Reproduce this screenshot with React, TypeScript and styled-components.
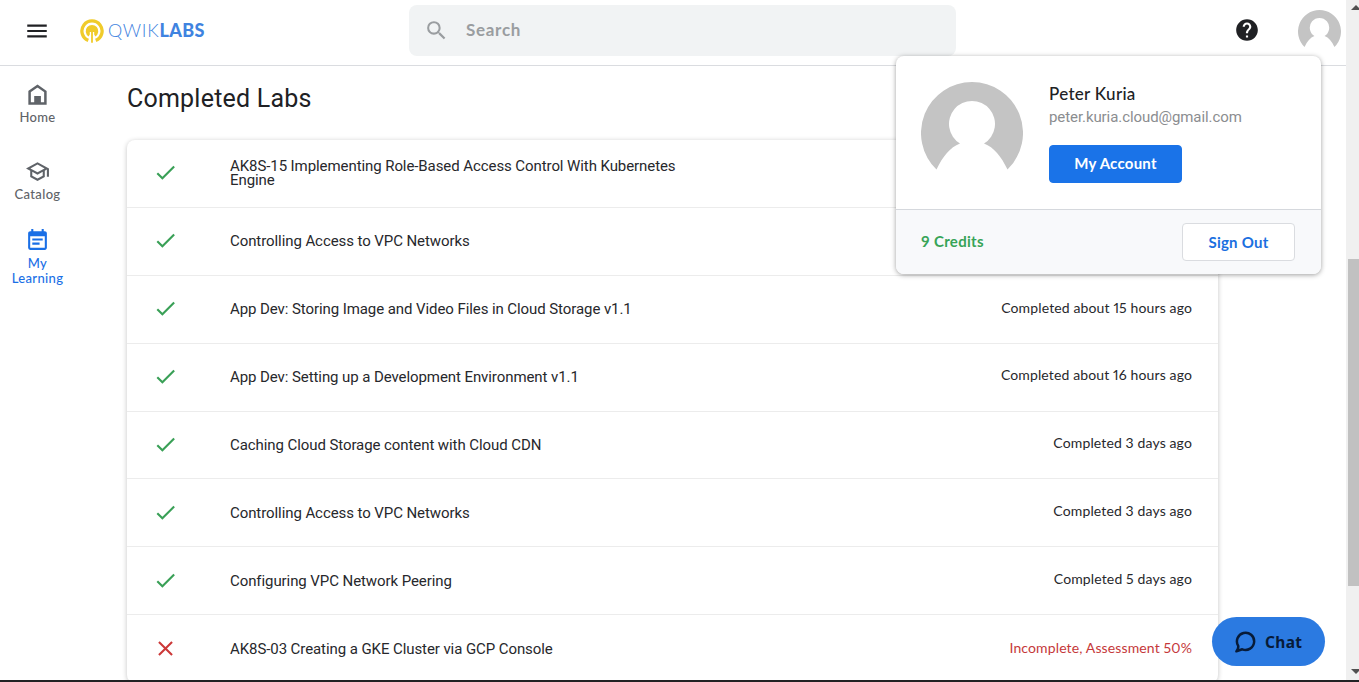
import React from "react";
import styled, { createGlobalStyle } from "styled-components";
import {
  MdCheck,
  MdClose,
  MdEventNote,
  MdHelp,
  MdMenu,
  MdOutlineSchool,
  MdSearch,
} from "react-icons/md";

const sans = `"Open Sans", "Liberation Sans", sans-serif`;
const product = `Lato, "Liberation Sans", sans-serif`;
const roboto = `Roboto, "Liberation Sans", sans-serif`;

const GlobalStyle = createGlobalStyle`
  * { box-sizing: border-box; }
  body { margin: 0; background: #fff; color: #202124; font-family: ${roboto}; overflow: hidden; }
  button { margin: 0; padding: 0; border: 0; background: none; font: inherit; cursor: pointer; }
  svg { display: block; }
`;

const Window = styled.div`
  display: flex;
  height: 682px;
  border-bottom: 2px solid #222224;
  overflow: hidden;
`;

const Page = styled.div`
  position: relative;
  flex: 1;
  display: flex;
  flex-direction: column;
  min-width: 0;
`;

const Header = styled.header`
  flex: none;
  display: grid;
  grid-template-columns: 409px 547px 1fr;
  height: 66px;
  border-bottom: 1px solid #dadce0;
`;

const Brand = styled.div`
  display: flex;
  align-items: center;
  height: 61px;
  padding-left: 24px;
  gap: 30px;
`;

const Logo = styled.div`
  display: flex;
  align-items: center;
  gap: 4px;
`;

const Wordmark = styled.span`
  padding-bottom: 1px;
  font: 300 18px/24px ${product};
  letter-spacing: 0.7px;
  color: #3f83e0;
  white-space: nowrap;

  b {
    font-weight: 900;
    letter-spacing: 0.4px;
  }
`;

const SearchBox = styled.div`
  display: flex;
  align-items: center;
  gap: 17px;
  height: 51px;
  margin-top: 5px;
  padding: 0 0 1px 15px;
  border-radius: 8px;
  background: #f1f3f4;
  color: #9a9da0;
  font: 700 17px/24px ${product};
  letter-spacing: 0.7px;
`;

const HeaderActions = styled.div`
  display: flex;
  align-items: center;
  justify-content: flex-end;
  gap: 38px;
  height: 60px;
  padding-right: 5px;
`;

const HeaderAvatar = styled.div`
  padding-top: 3px;
`;

const Body = styled.div`
  flex: 1;
  display: flex;
  min-height: 0;
`;

const SideNav = styled.nav`
  width: 75px;
  display: flex;
  flex-direction: column;
  align-items: center;
  padding-top: 16px;
`;

const NavItem = styled.button<{ $active?: boolean; $height: number }>`
  flex: none;
  display: flex;
  flex-direction: column;
  align-items: center;
  gap: 3px;
  width: 75px;
  height: ${(p) => p.$height}px;
  font: 500 13px/15px ${product};
  letter-spacing: 0.35px;
  color: ${(p) => (p.$active ? "#1a6fe6" : "#5f6368")};
`;

const Main = styled.main`
  flex: 1;
  min-width: 0;
  padding: 16px 128px 0 52px;
`;

const Heading = styled.h1`
  margin: 0 0 24.05px;
  font: 400 25px/34px ${roboto};
  letter-spacing: 0.22px;
  color: #202124;
`;

const LabCard = styled.section`
  border-radius: 8px;
  box-shadow: 0 1px 5px rgba(0, 0, 0, 0.24);
`;

const LabRow = styled.div`
  display: grid;
  grid-template-columns: 103px 470px 1fr;
  align-items: center;
  height: 67.875px;
  padding-right: 26px;
  border-bottom: 1px solid #ececec;
`;

const StatusIcon = styled.span<{ $failed?: boolean }>`
  padding: 0 0 1px 26px;
  color: ${(p) => (p.$failed ? "#cc3838" : "#3aa057")};
`;

const LabTitle = styled.span`
  font: 400 15px/14px ${roboto};
  letter-spacing: -0.08px;
  color: #27282c;
`;

const LabStatus = styled.span<{ $failed?: boolean }>`
  padding-bottom: ${(p) => (p.$failed ? 1.4 : 3.4)}px;
  text-align: right;
  white-space: nowrap;
  font: 400 14px/18px ${product};
  font-variant-numeric: proportional-nums;
  letter-spacing: 0.13px;
  color: ${(p) => (p.$failed ? "#c5383a" : "#27282c")};
`;

const AccountMenu = styled.aside`
  position: absolute;
  top: 56px;
  left: 896px;
  width: 425px;
  height: 218px;
  display: flex;
  flex-direction: column;
  border-radius: 8px;
  background: #fff;
  box-shadow: 0 1px 5px rgba(0, 0, 0, 0.38);
`;

const Profile = styled.div`
  display: flex;
  gap: 26px;
  height: 154px;
  padding: 26px 25px 0;
  border-bottom: 1px solid #d5d8dd;
`;

const ProfileText = styled.div`
  display: flex;
  flex-direction: column;
  align-items: flex-start;
`;

const UserName = styled.strong`
  font: 500 17px/24px ${product};
  letter-spacing: 0.3px;
  color: #202124;
`;

const Email = styled.span`
  font: 400 15px/22px ${roboto};
  letter-spacing: -0.08px;
  color: #8b8d90;
`;

const MenuFooter = styled.div`
  flex: 1;
  display: flex;
  align-items: center;
  justify-content: space-between;
  padding: 0 26px 0 25px;
  border-radius: 0 0 8px 8px;
  background: #f8f9fb;
`;

const Credits = styled.span`
  padding-bottom: 2px;
  font: 700 15px/20px ${product};
  letter-spacing: 0.3px;
  color: #37a457;
`;

const MenuButton = styled.button<{ $primary?: boolean }>`
  width: ${(p) => (p.$primary ? 133 : 113)}px;
  height: 38px;
  margin-top: ${(p) => (p.$primary ? 17 : 0)}px;
  padding-bottom: ${(p) => (p.$primary ? 2 : 0)}px;
  border: 1px solid ${(p) => (p.$primary ? "#1a73e8" : "#dadce0")};
  border-radius: 4px;
  background: ${(p) => (p.$primary ? "#1a73e8" : "#fff")};
  color: ${(p) => (p.$primary ? "#fff" : "#1a6fe0")};
  font: 700 15px/20px ${product};
  letter-spacing: 0.25px;
`;

const ChatButton = styled.button`
  position: absolute;
  left: 1212px;
  top: 617px;
  display: flex;
  align-items: center;
  gap: 9px;
  width: 113px;
  height: 49px;
  padding-left: 22px;
  border-radius: 25px;
  background: #2b7ae1;
  color: #071b38;
  font: 700 15.5px/24px "Noto Sans", ${sans};
  letter-spacing: 0.3px;
`;

const ScrollTrack = styled.div`
  width: 13px;
  display: flex;
  flex-direction: column;
  align-items: flex-end;
  justify-content: space-between;
  padding: 5px 0 6px;
  background: #f0f0f0;
  color: #505050;
`;

const ScrollThumb = styled.div`
  width: 11px;
  height: 327px;
  margin-top: 165px;
  background: #c1c1c1;
`;

const Avatar = ({ size }: { size: number }) => (
  <svg width={size} height={size} viewBox="0 0 102 102">
    <path d="M51 0A51 51 0 0 1 86.500 87.600C80 74 73 65.500 63 61.500A23 23 0 1 0 39 61.500C29 65.500 22 74 15.500 87.600A51 51 0 0 1 51 0Z" fill="#c4c4c4" />
  </svg>
);

const LogoMark = () => (
  <svg width="24" height="24" viewBox="0 0 24 24" fill="none">
    <path d="M8.300 21.400A10.100 10.100 0 1 1 15.700 21.400" stroke="#f0cb2b" strokeWidth="3.300" />
    <path d="M8.600 17.500A6.300 6.300 0 1 1 15.400 17.500L14.200 15.500V13H12.900V23.800H11.100V13H9.800V15.500Z" fill="#f0cb2b" />
  </svg>
);

const HomeIcon = () => (
  <svg width="25" height="25" viewBox="0 0 25 25">
    <path d="M4.600 9.600 12.500 4 20.400 9.600v11.900H4.600Z" fill="none" stroke="#5f6368" strokeWidth="2.500" />
    <path d="M9.200 14h6.700v7H9.200z" fill="#5f6368" />
  </svg>
);

const ChatIcon = () => (
  <svg width="22" height="22" viewBox="0 0 22 22">
    <path d="M4.200 14.800A8.600 8.600 0 1 1 8.300 18.300L2.400 20.300Q4.700 17.800 4.200 14.800Z" fill="none" stroke="currentColor" strokeWidth="2.500" strokeLinejoin="round" />
  </svg>
);

const Arrow = ({ down }: { down?: boolean }) => (
  <svg width="8" height="5" viewBox="0 0 8 5">
    <path d={down ? "M0 0h10L5 5Z" : "M0 5h10L5 0Z"} fill="currentColor" />
  </svg>
);

const labs = [
  { title: "AK8S-15 Implementing Role-Based Access Control With Kubernetes Engine", status: "" },
  { title: "Controlling Access to VPC Networks", status: "" },
  { title: "App Dev: Storing Image and Video Files in Cloud Storage v1.1", status: "Completed about 15 hours ago" },
  { title: "App Dev: Setting up a Development Environment v1.1", status: "Completed about 16 hours ago" },
  { title: "Caching Cloud Storage content with Cloud CDN", status: "Completed 3 days ago" },
  { title: "Controlling Access to VPC Networks", status: "Completed 3 days ago" },
  { title: "Configuring VPC Network Peering", status: "Completed 5 days ago" },
  { title: "AK8S-03 Creating a GKE Cluster via GCP Console", status: "Incomplete, Assessment 50%", failed: true },
];

export default function App() {
  return (
    <>
      <GlobalStyle />
      <Window>
        <Page>
          <Header>
            <Brand>
              <MdMenu size={26} color="#202124" />
              <Logo>
                <LogoMark />
                <Wordmark>QWIK<b>LABS</b></Wordmark>
              </Logo>
            </Brand>
            <SearchBox>
              <MdSearch size={25} />
              Search
            </SearchBox>
            <HeaderActions>
              <MdHelp size={26} color="#202124" />
              <HeaderAvatar><Avatar size={43} /></HeaderAvatar>
            </HeaderActions>
          </Header>
          <Body>
            <SideNav>
              <NavItem $height={77}><HomeIcon />Home</NavItem>
              <NavItem $height={69}><MdOutlineSchool size={25} />Catalog</NavItem>
              <NavItem $height={60} $active><MdEventNote size={25} />My<br />Learning</NavItem>
            </SideNav>
            <Main>
              <Heading>Completed Labs</Heading>
              <LabCard>
                {labs.map((lab, i) => (
                  <LabRow key={i}>
                    <StatusIcon $failed={lab.failed}>
                      {lab.failed ? <MdClose size={25} /> : <MdCheck size={25} />}
                    </StatusIcon>
                    <LabTitle>{lab.title}</LabTitle>
                    <LabStatus $failed={lab.failed}>{lab.status}</LabStatus>
                  </LabRow>
                ))}
              </LabCard>
            </Main>
          </Body>
          <AccountMenu>
            <Profile>
              <Avatar size={102} />
              <ProfileText>
                <UserName>Peter Kuria</UserName>
                <Email>peter.kuria.cloud@gmail.com</Email>
                <MenuButton $primary>My Account</MenuButton>
              </ProfileText>
            </Profile>
            <MenuFooter>
              <Credits>9 Credits</Credits>
              <MenuButton>Sign Out</MenuButton>
            </MenuFooter>
          </AccountMenu>
          <ChatButton><ChatIcon />Chat</ChatButton>
        </Page>
        <ScrollTrack>
          <Arrow />
          <ScrollThumb />
          <Arrow down />
        </ScrollTrack>
      </Window>
    </>
  );
}
